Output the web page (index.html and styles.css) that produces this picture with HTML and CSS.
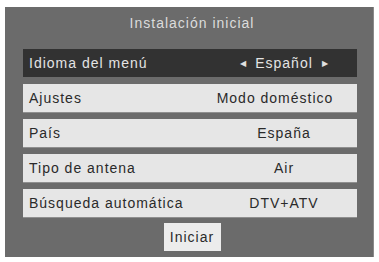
FILE: index.html
```html
<!DOCTYPE html>
<html lang="es">
<head>
<meta charset="utf-8">
<link rel="stylesheet" href="styles.css">
</head>
<body>
<div class="panel">
  <div class="title">Instalación inicial</div>
  <div class="rows">
    <div class="row active">
      <span class="label">Idioma del menú</span>
      <span class="value"><span class="arr">&#9664;</span><span>Español</span><span class="arr">&#9654;</span></span>
    </div>
    <div class="row">
      <span class="label">Ajustes</span>
      <span class="value wide">Modo doméstico</span>
    </div>
    <div class="row">
      <span class="label">País</span>
      <span class="value">España</span>
    </div>
    <div class="row">
      <span class="label">Tipo de antena</span>
      <span class="value">Air</span>
    </div>
    <div class="row">
      <span class="label">Búsqueda automática</span>
      <span class="value">DTV+ATV</span>
    </div>
  </div>
  <div class="actions"><span class="btn">Iniciar</span></div>
</div>
</body>
</html>
```
FILE: styles.css
```css
html, body { margin: 0; padding: 0; background: #ffffff; }
body {
  width: 379px;
  height: 262px;
  font-family: "Liberation Sans", Arial, sans-serif;
  font-size: 14px;
  letter-spacing: 1px;
  padding: 7px 5px 0 5px;
  box-sizing: border-box;
}
.panel {
  width: 369px;
  height: 250px;
  background: #6b6b6b;
  box-sizing: border-box;
  border-right: 1px solid #8a8a8a;
  padding: 0 16px 0 18px;
  display: flex;
  flex-direction: column;
}
.title {
  color: #dcdcdc;
  text-align: center;
  height: 42px;
  line-height: 32px;
  padding-left: 4px;
}
.rows {
  display: flex;
  flex-direction: column;
  gap: 7px;
}
.row {
  height: 28px;
  background: #e6e6e6;
  color: #2a2a2a;
  display: flex;
  align-items: center;
  padding-left: 6px;
  box-shadow: 0 1px 0 #8f8f8f;
}
.row.active {
  background: #323232;
  color: #e4e4e4;
  box-shadow: none;
}
.label { flex: 1; }
.value {
  width: 124px;
  margin-right: 11px;
  text-align: center;
  display: flex;
  justify-content: center;
  align-items: center;
  gap: 9px;
}
.value.wide { margin-right: 20px; }
.arr { font-size: 8px; letter-spacing: 0; color: #e0e0e0; }
.actions {
  display: flex;
  justify-content: center;
  padding-top: 6px;
  padding-left: 4px;
}
.btn {
  width: 57px;
  height: 28px;
  background: #ececec;
  color: #2a2a2a;
  display: flex;
  align-items: center;
  justify-content: center;
}
```
